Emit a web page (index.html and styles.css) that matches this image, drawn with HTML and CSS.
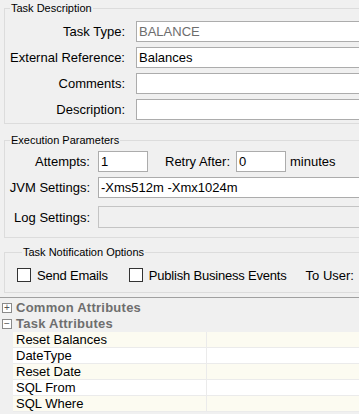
FILE: index.html
```html
<!DOCTYPE html>
<html lang="en">
<head>
    <meta charset="UTF-8">
    <meta name="viewport" content="width=device-width, initial-scale=1.0">
    <title>Task Properties</title>
    <link rel="stylesheet" href="styles.css">
</head>
<body>
    <div class="task-panel">

        <!-- Task Description -->
        <fieldset class="group group-desc">
            <legend>Task Description</legend>
            <div class="form-grid desc-grid">
                <label>Task Type:</label>
                <div class="field readonly">BALANCE</div>
                <label>External Reference:</label>
                <div class="field">Balances</div>
                <label>Comments:</label>
                <div class="field"></div>
                <label>Description:</label>
                <div class="field"></div>
            </div>
        </fieldset>

        <!-- Execution Parameters -->
        <fieldset class="group group-exec">
            <legend>Execution Parameters</legend>
            <div class="form-grid exec-grid">
                <label>Attempts:</label>
                <div class="inline-row">
                    <div class="field small">1</div>
                    <label class="retry-label">Retry After:</label>
                    <div class="field small">0</div>
                    <span class="unit">minutes</span>
                </div>
                <label>JVM Settings:</label>
                <div class="field">-Xms512m -Xmx1024m</div>
                <label class="log-label">Log Settings:</label>
                <div class="field disabled log-field"></div>
            </div>
        </fieldset>

        <!-- Task Notification Options -->
        <fieldset class="group group-notify">
            <legend>Task Notification Options</legend>
            <div class="check-row">
                <label class="check"><span class="box"></span>Send Emails</label>
                <label class="check"><span class="box"></span>Publish Business Events</label>
                <span class="to-user">To User:</span>
            </div>
        </fieldset>

        <div class="separator"></div>

        <!-- Attribute sections -->
        <div class="sections">
            <div class="section-head"><span class="toggle">+</span>Common Attributes</div>
            <div class="section-head"><span class="toggle">&minus;</span>Task Attributes</div>
        </div>

        <table class="attr-table">
            <tr><td>Reset Balances</td><td></td></tr>
            <tr><td>DateType</td><td></td></tr>
            <tr><td>Reset Date</td><td></td></tr>
            <tr><td>SQL From</td><td></td></tr>
            <tr><td>SQL Where</td><td></td></tr>
        </table>
    </div>
</body>
</html>
```

FILE: styles.css
```css
/* General Styling */
body {
    font-family: 'Liberation Sans', Arial, sans-serif;
    font-size: 13px;
    margin: 0;
    padding: 1px 0 0 0;
    background: #f0f0f0;
    color: #000;
    overflow: hidden;
}

.task-panel {
    width: 440px;
}

/* Group Boxes */
.group {
    border: 1px solid #dcdcdc;
    margin: 0 0 0 4px;
    padding: 0;
    min-width: 0;
}

.group legend {
    font-size: 11px;
    line-height: 14px;
    padding: 0 1px;
    margin-left: 5px;
}

.group-desc {
    padding: 6px 0 3px 0;
}

.group-exec {
    margin-top: 9px;
    padding: 4px 0 9px 0;
}

.group-notify {
    margin-top: 7px;
    padding: 9px 0 10px 12px;
}

/* Form Grids */
.form-grid {
    display: grid;
    align-items: center;
}

.form-grid label {
    text-align: right;
}

.desc-grid {
    grid-template-columns: 120px 1fr;
    column-gap: 11px;
    row-gap: 5px;
}

.exec-grid {
    grid-template-columns: 85px 1fr;
    column-gap: 8px;
    row-gap: 5px;
}

.log-label,
.log-field {
    margin-top: 3px;
}

/* Text Fields */
.field {
    height: 19px;
    line-height: 19px;
    border: 1px solid #acacac;
    background: #fff;
    padding: 0 2px;
    white-space: nowrap;
}

.field.readonly {
    color: #6d6d6d;
}

.field.disabled {
    background: #f0f0f0;
    border-color: #c4c4c4;
    height: 20px;
}

.field.small {
    width: 44px;
}

.inline-row {
    display: flex;
    align-items: center;
}

.retry-label {
    margin: 0 6px 0 17px;
}

.unit {
    margin-left: 4px;
}

/* Checkboxes */
.check-row {
    display: flex;
    align-items: center;
    height: 14px;
}

.check {
    display: flex;
    align-items: center;
    gap: 6px;
    margin-right: 21px;
    letter-spacing: -0.2px;
}

.box {
    width: 12px;
    height: 12px;
    border: 1px solid #333;
    background: #fff;
}

.to-user {
    margin-left: -2px;
}

/* Attribute Sections */
.separator {
    height: 1px;
    background: #a0a0a0;
    margin-top: 4px;
}

.sections {
    padding-top: 2px;
}

.section-head {
    height: 16px;
    line-height: 16px;
    font-weight: bold;
    color: #6e6e6e;
    display: flex;
    align-items: center;
    letter-spacing: 0.25px;
}

.toggle {
    width: 8px;
    height: 8px;
    border: 1px solid #8a8a8a;
    background: #fff;
    color: #555;
    font-size: 10px;
    line-height: 8px;
    text-align: center;
    font-weight: normal;
    margin: 0 4px 0 2px;
    letter-spacing: 0;
}

/* Attribute Table */
.attr-table {
    border-collapse: collapse;
    margin-left: 13px;
    width: 427px;
}

.attr-table td {
    height: 15px;
    line-height: 15px;
    padding: 0 0 0 3px;
    border-bottom: 1px solid #ebebeb;
}

.attr-table td:first-child {
    width: 190px;
    border-right: 1px solid #ebebeb;
}

.attr-table tr:nth-child(odd) {
    background: #fcfbf1;
}

.attr-table tr:nth-child(even) {
    background: #fff;
}
```
